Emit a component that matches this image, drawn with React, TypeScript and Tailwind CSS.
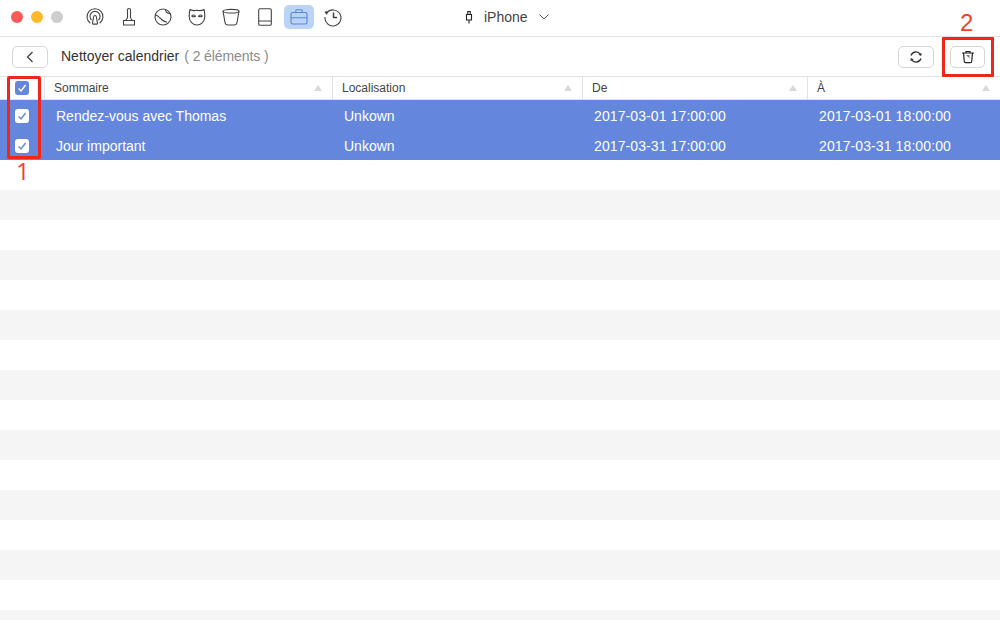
function Check({ header }: { header?: boolean }) {
  return (
    <div className={`flex h-[14px] w-[14px] items-center justify-center rounded-[3px] ${header ? "bg-[#6486dc]" : "bg-white"}`}>
      <svg viewBox="0 0 14 14" className="h-[14px] w-[14px]" fill="none" stroke={header ? "#fff" : "#6486dc"} strokeWidth="1.4">
        <path d="M3.6 7.4 6 10l4.6-6" />
      </svg>
    </div>
  )
}

function Sort() {
  return <div className="h-0 w-0 border-x-[4px] border-b-[6px] border-x-transparent border-b-[#d8d8d8]" />
}

function ToolIcon({ children, active }: { children: React.ReactNode; active?: boolean }) {
  return (
    <div className={`flex h-6 w-[30px] items-center justify-center rounded-[5px] ${active ? "bg-[#bcd3f9]" : ""}`}>
      <svg viewBox="0 0 20 20" className="h-5 w-5" fill="none" stroke={active ? "#5a86d6" : "#444"} strokeWidth="1.1">
        {children}
      </svg>
    </div>
  )
}

const cols = [
  { label: "Sommaire", w: "w-[288px]" },
  { label: "Localisation", w: "w-[250px]" },
  { label: "De", w: "w-[225px]" },
  { label: "À", w: "flex-1" },
]

const rows = [
  ["Rendez-vous avec Thomas", "Unkown", "2017-03-01 17:00:00", "2017-03-01 18:00:00"],
  ["Jour important", "Unkown", "2017-03-31 17:00:00", "2017-03-31 18:00:00"],
]

const stripes = Array.from({ length: 16 }, (_, i) => i)

export default function App() {
  return (
    <div className="relative h-[620px] w-[1000px] overflow-hidden bg-white font-['Liberation_Sans',Arial,sans-serif]">
      {/* title bar */}
      <div className="relative flex h-[37px] items-center border-b border-[#e2e2e2] bg-white pb-[2px] pl-[11px]">
        <div className="flex gap-2">
          <div className="h-3 w-3 rounded-full bg-[#fb5a56]" />
          <div className="h-3 w-3 rounded-full bg-[#fdb92c]" />
          <div className="h-3 w-3 rounded-full bg-[#cdcdcd]" />
        </div>
        <div className="ml-[17px] flex gap-[4px]">
          <ToolIcon>
            <path d="M5.300 16.200A8 8 0 1 1 14.700 16.200" />
            <path d="M6.600 13A5 5 0 1 1 13.400 13" />
            <path d="M10 8.500c.9 0 1.300.7 1.400 1.500l1.100 6.300c.1.500-.2.800-.7.800H8.200c-.5 0-.8-.3-.7-.8L8.600 10c.1-.8.500-1.500 1.400-1.500z" />
          </ToolIcon>
          <ToolIcon>
            <path d="M8.500 11V2.500c0-.6.400-1 1.500-1s1.500.4 1.500 1V11" />
            <path d="M8.500 11 6.500 13.500h7L11.500 11" />
            <path d="M4.500 13.500h11V18h-11z" />
          </ToolIcon>
          <ToolIcon>
            <circle cx="10" cy="10" r="8" />
            <path d="M2.300 8c1.600.2 3 1.200 4.200 2.500 1.600 1.800 3.500 4.300 7.500 4.800" />
            <path d="M12.500 2.500c0 1.800 1.300 3.800 4.700 4.300" />
          </ToolIcon>
          <ToolIcon>
            <path d="M3 2.500c2.300 1.200 4.700 1.500 7 .7 2.300.8 4.700.5 7-.7.800 2 .8 5 .8 7 0 5-3.800 8.500-7.800 8.500s-7.800-3.500-7.800-8.500c0-2 0-5 .8-7z" />
            <path d="M4.800 9c1-1.300 2.700-1.300 3.700.3-1.200.6-2.700.5-3.700-.3zM15.200 9c-1-1.300-2.700-1.300-3.700.3 1.200.6 2.700.5 3.700-.3z" />
          </ToolIcon>
          <ToolIcon>
            <ellipse cx="10" cy="4.200" rx="8" ry="1.800" />
            <path d="M2 4.200 4 15.500c.3 1.500 1.300 2.500 2.800 2.500h6.400c1.500 0 2.500-1 2.800-2.500L18 4.200" />
          </ToolIcon>
          <ToolIcon>
            <path d="M5 1.800h10c.8 0 1.300.5 1.300 1.300v13.800c0 .8-.5 1.300-1.300 1.300H5c-.8 0-1.300-.5-1.300-1.300V3.100c0-.8.5-1.300 1.300-1.300zM3.700 14h12.600" />
          </ToolIcon>
          <ToolIcon active>
            <rect x="2" y="5.500" width="16" height="11.500" rx="1.800" />
            <path d="M6.800 5.500V3.800c0-.6.400-1 1-1h4.400c.6 0 1 .4 1 1v1.700M2 10.800h16" />
          </ToolIcon>
          <ToolIcon>
            <path d="M3.800 5.800A8 8 0 1 1 2 10" />
            <path d="M1.200 4.800 5.200 4 4 8z" fill="#444" stroke="none" />
            <path d="M10.500 5.500v5H14" strokeWidth="1.500" />
          </ToolIcon>
        </div>
        <div className="absolute left-[465px] top-0 flex h-[34px] items-center">
          <svg viewBox="0 0 8 14" className="h-[14px] w-2" fill="none" stroke="#222" strokeWidth="1.100">
            <path d="M1.500 4.500h5v5.500h-5zM2.800 4.500V1.500h2.400v3M4 10v3.500" />
          </svg>
          <span className="ml-[11px] text-[14px] leading-none text-[#444]">iPhone</span>
          <svg viewBox="0 0 12 8" className="ml-[10px] h-2 w-3" fill="none" stroke="#555" strokeWidth="1">
            <path d="M1.500 1.500 6 6l4.500-4.500" />
          </svg>
        </div>
      </div>

      {/* toolbar */}
      <div className="flex h-[40px] items-center border-b border-[#e2e2e2] pl-3 pr-[15px]">
        <div className="flex h-[22px] w-9 items-center justify-center rounded-[5px] border border-[#d6d6d6]">
          <svg viewBox="0 0 8 12" className="h-3 w-2" fill="none" stroke="#333" strokeWidth="1.100">
            <path d="M6.500 1 1.500 6l5 5" />
          </svg>
        </div>
        <span className="ml-[13px] text-[14px] text-[#333]">Nettoyer calendrier</span>
        <span className="ml-[5px] text-[14px] tracking-[-0.1px] text-[#8a8a8a]">( 2 éléments )</span>
        <div className="ml-auto flex gap-4">
          <div className="flex h-[22px] w-9 items-center justify-center rounded-[5px] border border-[#d6d6d6]">
            <svg viewBox="0 0 14 14" className="h-[14px] w-[14px]" fill="none" stroke="#333" strokeWidth="1.300">
              <path d="M2 5.500A5.200 5.200 0 0 1 11.200 4.200M12 8.500A5.200 5.200 0 0 1 2.800 9.800" />
              <path d="M12.500 2.800 12.300 6 9.400 4.700zM1.500 11.200 1.700 8l2.900 1.300z" fill="#333" stroke="none" />
            </svg>
          </div>
          <div className="flex h-[22px] w-[35px] items-center justify-center rounded-[5px] border border-[#d6d6d6]">
            <svg viewBox="0 0 14 14" className="h-[14px] w-[14px]" fill="none" stroke="#222" strokeWidth="1.200">
              <path d="M1 3h12M2.500 3l.8 8.500c.1.700.5 1.200 1.200 1.200h5c.7 0 1.100-.5 1.200-1.200L11.500 3M5 3V1.500h4V3" />
              <path d="M5 5h3.500v3.500z" fill="#888" stroke="none" />
            </svg>
          </div>
        </div>
      </div>

      {/* table header */}
      <div className="flex h-[23px] items-center border-b border-[#e2e2e2] text-[12px] text-[#444]">
        <div className="flex h-full w-[45px] items-center border-r border-[#e2e2e2] pl-[15px]">
          <Check header />
        </div>
        {cols.map((c, i) => (
          <div
            key={c.label}
            className={`flex h-full items-center justify-between pl-[9px] pr-[10px] ${c.w} ${i < 3 ? "border-r border-[#e2e2e2]" : ""}`}
          >
            <span>{c.label}</span>
            <Sort />
          </div>
        ))}
      </div>

      {/* selected rows */}
      {rows.map((r) => (
        <div key={r[0]} className="flex h-[30px] items-center bg-[#6486dc] pt-[2px] text-[14px] text-white">
          <div className="w-[44px] pl-[15px]">
            <Check />
          </div>
          <div className="w-[288px] pl-[12px]">{r[0]}</div>
          <div className="w-[250px] pl-[12px]">{r[1]}</div>
          <div className="w-[225px] pl-[12px] tracking-[0.1px]">{r[2]}</div>
          <div className="flex-1 pl-[12px] tracking-[0.1px]">{r[3]}</div>
        </div>
      ))}

      {/* empty striped rows */}
      {stripes.map((i) => (
        <div key={i} className={`h-[30px] ${i % 2 === 1 ? "bg-[#f5f5f5]" : "bg-white"}`} />
      ))}

      {/* annotations */}
      <div className="absolute left-[7px] top-[76px] h-[83px] w-[34px] rounded-[2px] border-[3px] border-[#f0261a]" />
      <div className="absolute left-[942px] top-[37px] h-[40px] w-[52px] rounded-[1px] border-[3px] border-[#f0261a]" />
      <span className="absolute left-[16px] top-[157px] font-['Open_Sans',sans-serif] text-[24px] font-normal leading-[28px] text-[#f0402c]">1</span>
      <span className="absolute left-[960px] top-[9px] text-[24px] leading-[28px] text-[#f0402c]">2</span>
    </div>
  )
}
